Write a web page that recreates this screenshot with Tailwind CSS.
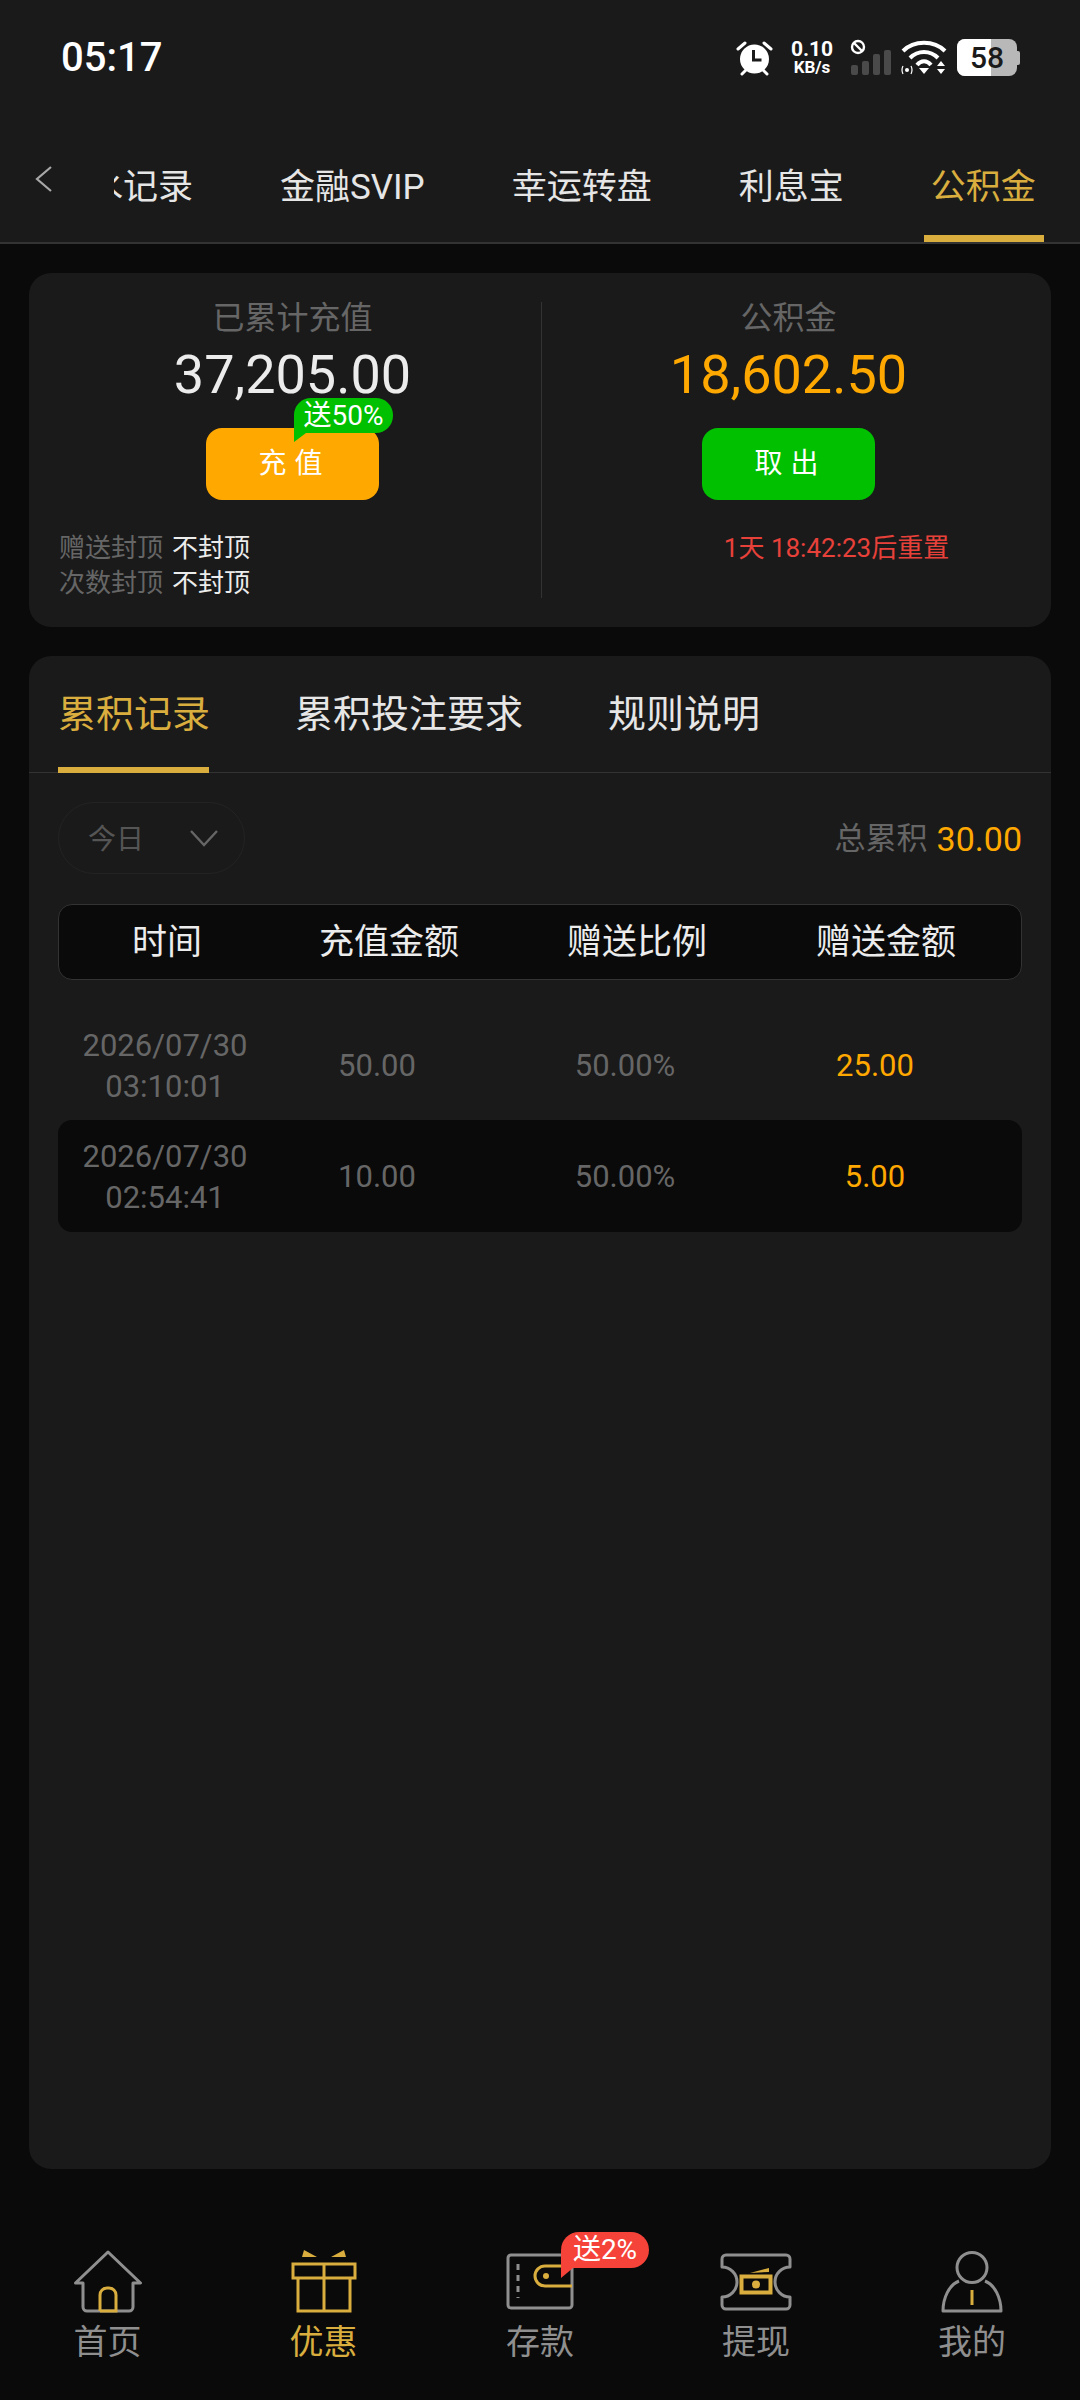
<!DOCTYPE html>
<html lang="zh-CN">
<head>
<meta charset="utf-8">
<script src="https://cdn.jsdelivr.net/npm/@tailwindcss/browser@4"></script>
</head>
<body class="m-0 bg-[#0a0a0a] font-['Roboto','Noto_Sans_CJK_SC',sans-serif]">
<div class="relative w-[1080px] h-[2400px] bg-[#0a0a0a] overflow-hidden flex flex-col">

  <!-- header -->
  <header class="h-[244px] shrink-0 bg-[#1a1a1a] border-b-2 border-[#333] flex flex-col">
    <div class="flex items-center h-[76px] pt-[39px] pl-[61px] pr-[60px] shrink-0">
      <span class="text-[40px] leading-[37px] font-medium text-white w-[102px]">05:17</span>
      <div class="flex-1"></div>
      <svg class="w-[37px] h-[37px]" viewBox="0 0 37 37">
        <circle cx="18.5" cy="20" r="14.5" fill="#fff"/>
        <path d="M17.5 11v10h8" fill="none" stroke="#1a1a1a" stroke-width="3"/>
        <path d="M2 10l7-6M35 10l-7-6" stroke="#fff" stroke-width="3" stroke-linecap="round"/>
        <path d="M6 35l4-4M31 35l-4-4" stroke="#fff" stroke-width="3" stroke-linecap="round"/>
      </svg>
      <div class="ml-[17px] w-[44px] flex flex-col items-center text-white font-bold">
        <span class="text-[21px] leading-[20px]">0.10</span>
        <span class="text-[17px] leading-[17px]">KB/s</span>
      </div>
      <svg class="ml-[16px] w-[42px] h-[37px]" viewBox="0 0 42 37">
        <circle cx="8" cy="8" r="6" fill="none" stroke="#fff" stroke-width="2.4"/>
        <path d="M4 4l8 8" stroke="#fff" stroke-width="2.4"/>
        <rect x="1" y="26" width="7" height="10" rx="2" fill="#4a4a4a"/>
        <rect x="12" y="22" width="7" height="14" rx="2" fill="#4a4a4a"/>
        <rect x="23" y="15" width="7" height="21" rx="2" fill="#4a4a4a"/>
        <rect x="34" y="11" width="7" height="25" rx="2" fill="#4a4a4a"/>
      </svg>
      <svg class="ml-[9px] w-[46px] h-[37px]" viewBox="0 0 46 37">
        <path d="M2 12C13 1 33 1 44 12" fill="none" stroke="#fff" stroke-width="4"/>
        <path d="M9 19C17 11 29 11 37 19" fill="none" stroke="#fff" stroke-width="4"/>
        <path d="M16 26C20 21 26 21 30 26" fill="none" stroke="#fff" stroke-width="4"/>
        <path d="M18 29h10l-5 6z" fill="#fff"/>
        <path d="M36 27h8l-4-5zM36 30h8l-4 5z" fill="#fff"/>
        <circle cx="6" cy="31" r="2" fill="#fff"/>
        <path d="M2 27q-2 4 0 8M10 27q2 4 0 8" fill="none" stroke="#fff" stroke-width="1.2"/>
      </svg>
      <div class="ml-[10px] relative w-[60px] h-[37px] rounded-[8px] bg-[#b8b8b8] overflow-hidden flex items-center justify-center">
        <div class="absolute left-0 top-0 bottom-0 w-[34px] bg-white"></div>
        <span class="relative text-[30px] leading-[37px] font-medium text-[#1a1a1a]">58</span>
      </div>
      <div class="w-[3px] h-[14px] bg-[#b8b8b8] rounded-r-[2px]"></div>
    </div>

    <div class="flex flex-1 min-h-0">
      <div class="w-[114px] shrink-0 pl-[34px] pt-[89px]">
        <svg class="w-[19px] h-[28px] block" viewBox="0 0 19 28"><path d="M17 2L3 14l14 12" fill="none" stroke="#a8a8a8" stroke-width="2.2"/></svg>
      </div>
      <div class="relative flex-1 overflow-hidden flex gap-[87px] pt-[87px]">
        <span class="-ml-[61px] text-[35px] leading-[50px] text-[#e6e6e6] whitespace-nowrap">返水记录</span>
        <span class="text-[35px] leading-[50px] text-[#e6e6e6] whitespace-nowrap">金融SVIP</span>
        <span class="text-[35px] leading-[50px] text-[#e6e6e6] whitespace-nowrap">幸运转盘</span>
        <span class="text-[35px] leading-[50px] text-[#e6e6e6] whitespace-nowrap">利息宝</span>
        <span class="text-[35px] leading-[50px] text-[#d9ae3e] whitespace-nowrap">公积金</span>
        <div class="absolute right-[36px] bottom-0 w-[120px] h-[7px] bg-[#d9ae3e]"></div>
      </div>
    </div>
  </header>

  <main class="flex flex-col px-[29px] pt-[29px] gap-[29px]">
    <!-- card 1 -->
    <section class="h-[354px] rounded-[22px] bg-[#1a1a1a] flex">
      <div class="w-[512px] pl-[15px] pt-[25px] flex flex-col items-center">
        <div class="text-[32px] leading-[40px] text-[#666]">已累计充值</div>
        <div class="mt-[5px] text-[54px] leading-[64px] text-[#ececec]">37,205.00</div>
        <button class="relative mt-[21px] w-[173px] h-[72px] pl-[4px] rounded-[16px] bg-[#ffa800] text-white text-[28px] tracking-[8px] flex items-center justify-center">
          充值
          <span class="absolute left-[88px] -top-[30px] w-[99px] h-[35px] rounded-[17px] rounded-bl-none bg-[#00c000] text-white text-[28px] leading-[35px] tracking-normal text-center">送50%</span>
          <svg class="absolute left-[88px] top-[5px] w-[12px] h-[9px]" viewBox="0 0 12 9"><path d="M0 0h12L0 9z" fill="#00c000"/></svg>
        </button>
        <div class="mt-[31px] w-full pl-[15px] text-[26px] leading-[35px]">
          <div class="flex gap-[9px]"><span class="text-[#666]">赠送封顶</span><span class="text-[#ececec]">不封顶</span></div>
          <div class="flex gap-[9px]"><span class="text-[#666]">次数封顶</span><span class="text-[#ececec]">不封顶</span></div>
        </div>
      </div>
      <div class="w-px h-[296px] mt-[29px] bg-[#333]"></div>
      <div class="flex-1 pr-[16px] pt-[25px] flex flex-col items-center">
        <div class="text-[32px] leading-[40px] text-[#666]">公积金</div>
        <div class="mt-[5px] text-[54px] leading-[64px] text-[#ffa800]">18,602.50</div>
        <button class="mt-[21px] w-[173px] h-[72px] pl-[4px] rounded-[16px] bg-[#00c000] text-white text-[28px] tracking-[8px] flex items-center justify-center">取出</button>
        <div class="mt-[31px] ml-[96px] text-[26px] leading-[35px] text-[#e8413a] whitespace-nowrap">1天 18:42:23后重置</div>
      </div>
    </section>

    <!-- card 2 -->
    <section class="h-[1513px] rounded-[22px] bg-[#1a1a1a]">
      <div class="relative h-[117px] border-b border-[#333] flex gap-[85px] pl-[29px] pt-[32px] text-[38px] leading-[52px] text-[#e6e6e6]">
        <span class="text-[#d9ae3e]">累积记录</span>
        <span>累积投注要求</span>
        <span>规则说明</span>
        <div class="absolute left-[29px] -bottom-px w-[151px] h-[6px] bg-[#d9ae3e]"></div>
      </div>
      <div class="px-[29px] pt-[29px]">
        <div class="flex items-center justify-between">
          <div class="w-[187px] h-[72px] rounded-[36px] border border-[#232323] flex items-center pl-[29px]">
            <span class="text-[28px] leading-[36px] pt-[3px] text-[#555]">今日</span>
            <svg class="ml-[45px] w-[30px] h-[18px]" viewBox="0 0 30 18"><path d="M2 2l13 14L28 2" fill="none" stroke="#666" stroke-width="2.4"/></svg>
          </div>
          <div class="flex items-center gap-[9px] pt-[2px]">
            <span class="text-[31px] text-[#666]">总累积</span>
            <span class="text-[34px] text-[#ffa800]">30.00</span>
          </div>
        </div>
        <div class="mt-[30px] h-[76px] pt-[2px] rounded-[14px] bg-[#0a0a0a] border border-[#333] grid grid-cols-[216px_228px_268px_230px] items-center text-center text-[35px] text-[#ececec]">
          <span>时间</span><span>充值金额</span><span>赠送比例</span><span>赠送金额</span>
        </div>
        <div class="mt-[30px] h-[110px] pt-[2px] grid grid-cols-[214px_210px_286px_214px] items-center text-center text-[31px] text-[#666]">
          <div class="leading-[41px]">2026/07/30<br>03:10:01</div>
          <span>50.00</span><span>50.00%</span><span class="text-[#ffa800]">25.00</span>
        </div>
        <div class="h-[112px] pt-[2px] rounded-[14px] bg-[#0a0a0a] grid grid-cols-[214px_210px_286px_214px] items-center text-center text-[31px] text-[#666]">
          <div class="leading-[41px]">2026/07/30<br>02:54:41</div>
          <span>10.00</span><span>50.00%</span><span class="text-[#ffa800]">5.00</span>
        </div>
      </div>
    </section>
  </main>

  <!-- bottom nav -->
  <nav class="mt-[79px] grid grid-cols-5 text-[34px] leading-[44px] text-[#8f8f8f]">
    <div class="flex flex-col items-center -ml-[1px]">
      <svg class="w-[80px] h-[72px]" viewBox="0 0 80 72" fill="none" stroke-width="3">
        <path d="M15 35H7.5L40 4l32.5 31H65v24a4 4 0 0 1-4 4H19a4 4 0 0 1-4-4V35Z" stroke="#8f8f8f" stroke-linejoin="round"/>
        <path d="M32 63V47a7 7 0 0 1 7-7h2a7 7 0 0 1 7 7v16H32" stroke="#d9ae3e"/>
      </svg>
      <span>首页</span>
    </div>
    <div class="flex flex-col items-center text-[#d9ae3e] -ml-[1px]">
      <svg class="w-[80px] h-[72px]" viewBox="0 0 80 72" fill="none" stroke="#d9ae3e" stroke-width="3">
        <path d="M20 2l13 7H18zM60 2L47 9h15z" fill="#d9ae3e" stroke="none"/>
        <rect x="9" y="16" width="62" height="14"/>
        <path d="M14 30v33h52V30M40 16v47"/>
      </svg>
      <span>优惠</span>
    </div>
    <div class="relative flex flex-col items-center">
      <svg class="w-[80px] h-[72px]" viewBox="0 0 80 72" fill="none" stroke-width="3">
        <rect x="8" y="7" width="64" height="53" rx="3" stroke="#8f8f8f"/>
        <path d="M18 16v34" stroke="#8f8f8f" stroke-dasharray="6 5"/>
        <path d="M72 18H45a10 10 0 0 0 0 20h27" stroke="#d9ae3e"/>
        <circle cx="46" cy="28" r="3" fill="#d9ae3e"/>
      </svg>
      <span>存款</span>
      <div class="absolute left-[129px] -top-[16px] w-[88px] h-[36px] rounded-[18px] rounded-bl-none bg-[#f5433a] text-white text-[28px] leading-[36px] text-center">送2%</div>
      <svg class="absolute left-[129px] top-[20px] w-[12px] h-[10px]" viewBox="0 0 12 10"><path d="M0 0h12L0 10z" fill="#f5433a"/></svg>
    </div>
    <div class="flex flex-col items-center">
      <svg class="w-[80px] h-[72px]" viewBox="0 0 80 72" fill="none" stroke-width="3">
        <path d="M10 7H70a4 4 0 0 1 4 4V19A15 15 0 0 0 74 49V57a4 4 0 0 1-4 4H10a4 4 0 0 1-4-4V49A15 15 0 0 0 6 19V11a4 4 0 0 1 4-4Z" stroke="#8f8f8f" stroke-linejoin="round"/>
        <rect x="25.5" y="28.5" width="29" height="16" stroke="#d9ae3e" stroke-width="4"/>
        <circle cx="40" cy="36.5" r="4" fill="#d9ae3e"/>
        <path d="M34 25l19-5v4z" fill="#d9ae3e"/>
      </svg>
      <span>提现</span>
    </div>
    <div class="flex flex-col items-center">
      <svg class="w-[80px] h-[72px]" viewBox="0 0 80 72" fill="none" stroke-width="3">
        <circle cx="40" cy="19.5" r="15" stroke="#8f8f8f"/>
        <path d="M27 33C17 37 11 50 11 63H69C69 50 63 37 53 33" stroke="#8f8f8f" stroke-linejoin="round"/>
        <path d="M40 42v15" stroke="#d9ae3e"/>
      </svg>
      <span>我的</span>
    </div>
  </nav>
</div>
</body>
</html>
